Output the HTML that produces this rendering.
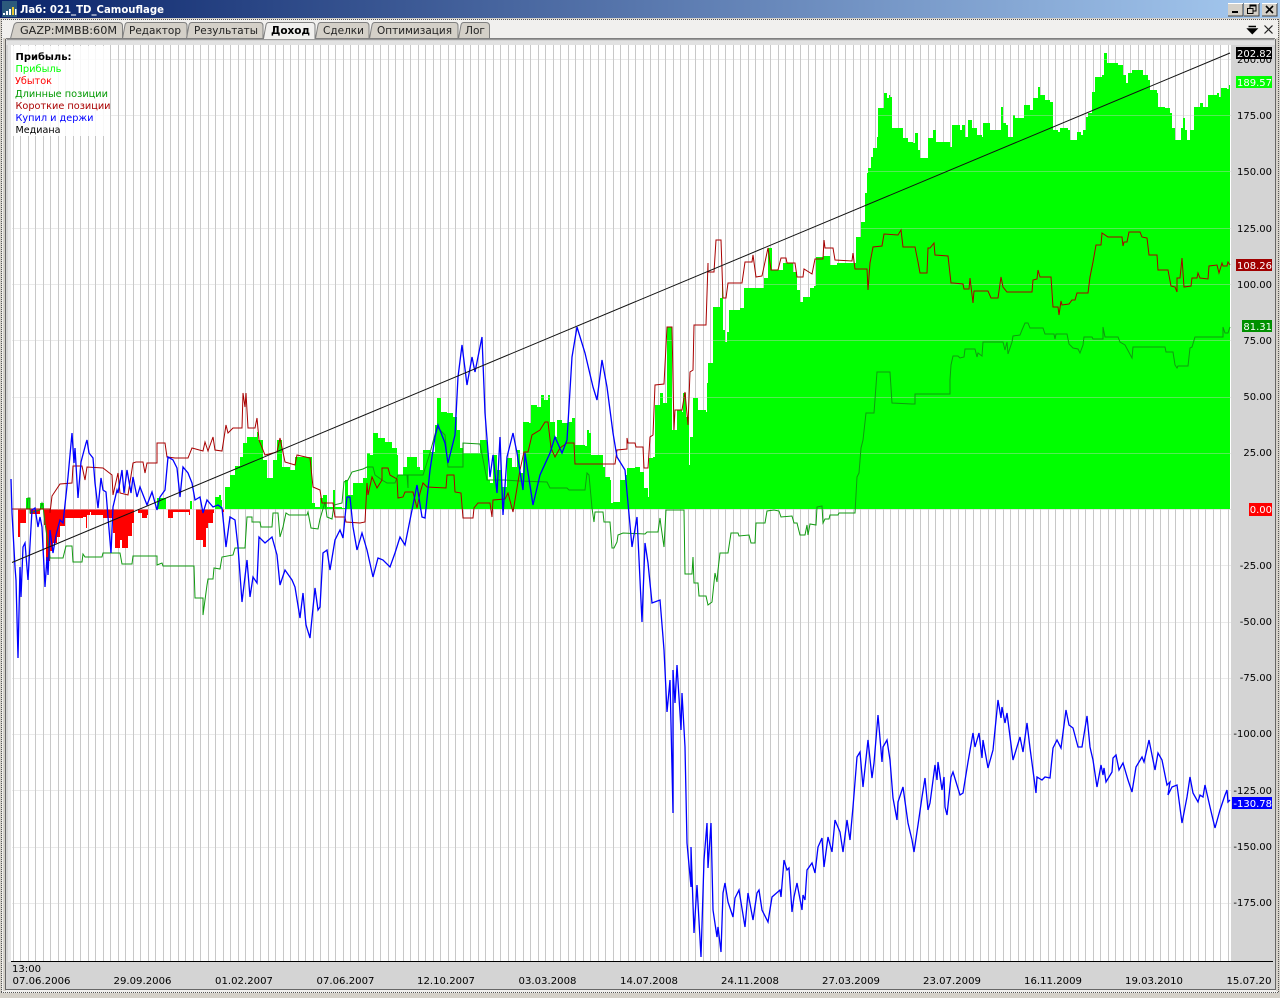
<!DOCTYPE html>
<html><head><meta charset="utf-8"><title>Лаб: 021_TD_Camouflage</title>
<style>
html,body{margin:0;padding:0;background:#d4d0c8;width:1280px;height:998px;overflow:hidden}
svg{display:block}
text{font-family:"DejaVu Sans","Liberation Sans",sans-serif;font-size:10px;fill:#000}
.tab{font-size:10.5px;fill:#222}
.lg{font-size:9.5px}
.ax{text-anchor:end}
.tag{fill:#fff;text-anchor:end}
</style></head><body>
<svg width="1280" height="998" viewBox="0 0 1280 998" xmlns="http://www.w3.org/2000/svg">
<defs>
<linearGradient id="tb" x1="0" x2="1" y1="0" y2="0"><stop offset="0" stop-color="#0a246a"/><stop offset="1" stop-color="#a6caf0"/></linearGradient>
<pattern id="vg" patternUnits="userSpaceOnUse" x="5" y="0" width="15" height="20"><rect x="0" y="0" width="1" height="20" fill="#c8c8c8"/><rect x="8" y="0" width="1" height="20" fill="#c8c8c8"/></pattern>
<clipPath id="pc"><rect x="10" y="45" width="1221" height="916"/></clipPath>
</defs>

<rect width="1280" height="998" fill="#d4d0c8"/>
<!-- title bar -->
<rect x="0" y="0" width="1280" height="18" fill="url(#tb)"/>
<rect x="2" y="1" width="15" height="16" fill="#2c5a7c"/>
<g shape-rendering="crispEdges">
<rect x="3" y="13" width="2" height="2" fill="#fff"/><rect x="6" y="11" width="2" height="4" fill="#fff"/><rect x="9" y="9" width="2" height="6" fill="#fff"/><rect x="12" y="7" width="2" height="8" fill="#e8c832"/><rect x="15" y="9" width="1.5" height="6" fill="#fff"/>
</g>
<text x="20" y="13" font-weight="bold" style="font-size:11px;fill:#fff" textLength="144" lengthAdjust="spacingAndGlyphs">Лаб: 021_TD_Camouflage</text>
<!-- window buttons -->
<g shape-rendering="crispEdges">
<rect x="1228" y="3" width="15" height="13" fill="#d4d0c8"/>
<rect x="1244" y="3" width="15" height="13" fill="#d4d0c8"/>
<rect x="1262" y="3" width="15" height="13" fill="#d4d0c8"/>
<path d="M1228 16H1243V3M1244 16H1259V3M1262 16H1277V3" fill="none" stroke="#404040"/>
<path d="M1228 3.5H1243M1244 3.5H1259M1262 3.5H1277" fill="none" stroke="#fff"/>
<rect x="1232" y="11" width="6" height="2" fill="#000"/>
<rect x="1250" y="5" width="6" height="6" fill="none" stroke="#000"/><rect x="1250" y="5" width="6" height="1.5" fill="#000"/>
<rect x="1247.5" y="8.5" width="5.5" height="5" fill="#d4d0c8" stroke="#000"/>
</g>
<path d="M1266 6L1273 13M1273 6L1266 13" stroke="#000" stroke-width="1.6" fill="none"/>

<!-- inner panel -->
<rect x="2" y="19" width="1276" height="974" fill="#f1f0ee"/>
<path d="M1 19.5H1279M1.5 19V993M1278.5 19V993M1 992.5H1279" fill="none" stroke="#555" stroke-dasharray="1 1" shape-rendering="crispEdges"/>
<rect x="3" y="38" width="3" height="953" fill="#d4d0c8"/>
<rect x="1276" y="38" width="2" height="953" fill="#d4d0c8"/>

<!-- close/menu in tab strip -->
<path d="M1248.5 26.5H1256M1248 29L1252.3 33.5L1256.7 29Z" stroke="#000" fill="#000" stroke-width="1.4"/>
<path d="M1264.5 25.5L1272.5 33.5M1272.5 25.5L1264.5 33.5" stroke="#222" stroke-width="1.2" fill="none"/>

<!-- tabs -->
<g stroke="#808080" stroke-width="1" fill="#d4d0c8">
<path d="M10.5 38.5L14 25Q15 22.5 18 22.5H119Q122.5 22.5 122.5 26V38.5Z"/>
<path d="M122.5 38.5L125 25Q125.5 22.5 128 22.5H184Q187 22.5 187 26V38.5Z"/>
<path d="M186.5 38.5L189 25Q189.5 22.5 192 22.5H260Q263 22.5 263 26V38.5Z"/>
<path d="M315.5 38.5L318 25Q318.5 22.5 321 22.5H366Q369 22.5 369 26V38.5Z"/>
<path d="M369.5 38.5L372 25Q372.5 22.5 375 22.5H455Q458 22.5 458 26V38.5Z"/>
<path d="M458.5 38.5L461 25Q461.5 22.5 464 22.5H486Q489.5 22.5 489.5 26V38.5Z"/>
</g>
<rect x="6" y="38" width="1269" height="1.5" fill="#808080"/>
<path d="M263.5 40V38.5L266 25Q266.5 22.5 269 22.5H312Q315 22.5 315 26V40Z" fill="#f1f0ee" stroke="#808080"/>
<rect x="265" y="37" width="49" height="4" fill="#f1f0ee"/>
<text class="tab" x="20" y="34" textLength="97" lengthAdjust="spacingAndGlyphs">GAZP:MMBB:60M</text>
<text class="tab" x="129" y="34" textLength="52" lengthAdjust="spacingAndGlyphs">Редактор</text>
<text class="tab" x="194" y="34" textLength="64" lengthAdjust="spacingAndGlyphs">Результаты</text>
<text class="tab" x="271" y="34" font-weight="bold" style="fill:#000" textLength="39" lengthAdjust="spacingAndGlyphs">Доход</text>
<text class="tab" x="323" y="34" textLength="41" lengthAdjust="spacingAndGlyphs">Сделки</text>
<text class="tab" x="377" y="34" textLength="75" lengthAdjust="spacingAndGlyphs">Оптимизация</text>
<text class="tab" x="465" y="34" textLength="20" lengthAdjust="spacingAndGlyphs">Лог</text>

<!-- chart frame -->
<rect x="6" y="39" width="1269" height="950" fill="#d4d4d4"/>
<rect x="6" y="41" width="1269" height="4" fill="#e2e2e2"/>
<path d="M5.5 39V989.5H1275.5V39" fill="none" stroke="#666" shape-rendering="crispEdges"/>
<path d="M7 39.5H1274" fill="none" stroke="#999" shape-rendering="crispEdges"/>
<rect x="8" y="45" width="3" height="917" fill="#e6e6e6"/>
<rect x="11" y="45" width="1220" height="916" fill="#fff"/>
<rect x="12" y="45" width="1219" height="916" fill="url(#vg)" shape-rendering="crispEdges"/>

<g clip-path="url(#pc)">
<!-- Loss area -->
<path fill="#f00" shape-rendering="crispEdges" d="M18 509V537H20V523H26V509H30V514H40V509H44V525H46V561H50V551H53V543H57V537H60V526H65V518H83V517H86V528H87V515H90V512H91V515H103V518H112V520H113V533H115V548H120V540H122V548H128V536H132V523H134V509H138V513H142V518H147V515H148V509H168V518H173V512H189V515H190V509H196V540H203V547H206V528H208V523H213V513H214V509H222V512H224V509Z"/>
<!-- Profit area -->
<path fill="#0f0" shape-rendering="crispEdges" d="M26 509V498H30V509ZM40 509V503H44V509ZM157 509V498H166V509ZM190 509V501H192V509ZM215 509V497H219V495H221V500H222V509Z"/>
<path fill="#0f0" shape-rendering="crispEdges" d="M225 509V487H230V475H235V466H240V457H243V443H247V437H253V437H257V432H258V440H263V460H267V478H272V478H273V460H277V440H282V467H290V470H295V457H307V457H312V503H315V507H320V498H323V495H327V507H333V490H335V507H342V508H345V480H348V495H353V483H363V478H367V453H370V455H373V433H378V438H385V442H392V448H397V455H398V475H403V467H407V457H413V457H417V467H420V470H423V450H430V452H435V425H437V398H441V412H447V413H453V417H457V430H460V448H463V443H463V453H478V453H480V440H487V442H488V480H490V483H493V455H497V470H502V487H507V458H512V467H517V450H520V473H523V422H529V423H531V405H537V407H541V395H544V400H548V395H550V422H555V437H557V420H562V423H568V422H572V418H575V425H575V445H585V446H587V430H589V433H591V455H603V467H605V477H610V480H611V503H613V502H620V480H625V475H627V468H635V467H640V472H644V488H648V497H649V458H653V457H655V405H660V393H663V403H667V327H672V430H677V410H682V412H683V393H686V417H689V465H690V437H693V398H698V410H699V410H706V412H707V383H708V363H713V307H715V307H720V298H722V283H723V330H725V342H727V332H729V310H740V308H744V288H750V288H762V288H764V278H768V248H772V270H778V270H783V263H793V272H797V290H800V302H803V297H810V288H814V286H816V257H823V256H830V265H837V263H853V263H856V237H861V222H865V193H867V173H868V168H871V157H873V148H877V137H878V108H883V108H884V93H887V98H889V95H890V97H892V128H900V128H903V138H908V142H913V143H915V133H918V150H920V158H927V158H928V138H933V130H936V142H948V142H950V147H952V125H960V130H962V125H965V137H968V120H972V128H977V135H982V137H983V123H988V123H990V130H998V130H1001V107H1003V123H1006V125H1008V137H1012V137H1013V115H1015V118H1022V118H1024V105H1029V105H1030V110H1033V98H1037V98H1038V87H1040V95H1043V95H1045V100H1050V102H1053V130H1058V132H1060V128H1068V130H1070V140H1075V140H1077V132H1081V135H1083V130H1086V117H1088V113H1092V92H1095V77H1102V75H1104V53H1107V63H1118V65H1123V75H1126V83H1128V73H1132V70H1138V70H1143V75H1148V80H1150V90H1157V93H1158V107H1165V108H1170V113H1172V128H1175V140H1179V140H1181V128H1183V118H1185V130H1187V140H1190V130H1194V107H1200V103H1203V107H1208V95H1217V93H1219V97H1221V88H1227V89H1229V85H1230V509Z"/>
</g>
<!-- horizontal grid -->
<g fill="rgba(205,205,205,.42)" shape-rendering="crispEdges">
<rect x="12" y="59" width="1219" height="1"/><rect x="12" y="115" width="1219" height="1"/><rect x="12" y="171" width="1219" height="1"/><rect x="12" y="228" width="1219" height="1"/><rect x="12" y="284" width="1219" height="1"/><rect x="12" y="340" width="1219" height="1"/><rect x="12" y="397" width="1219" height="1"/><rect x="12" y="453" width="1219" height="1"/><rect x="12" y="565" width="1219" height="1"/><rect x="12" y="622" width="1219" height="1"/><rect x="12" y="678" width="1219" height="1"/><rect x="12" y="734" width="1219" height="1"/><rect x="12" y="790" width="1219" height="1"/><rect x="12" y="847" width="1219" height="1"/><rect x="12" y="903" width="1219" height="1"/>
</g>
<rect x="12" y="509" width="1219" height="1" fill="rgba(205,205,205,.55)" shape-rendering="crispEdges"/>

<g clip-path="url(#pc)" fill="none" stroke-width="1" stroke-linejoin="miter">
<!-- Long positions -->
<path stroke="#109a10" d="M12 509L27 509L28 498L30 498L30 513L40 510L42 503L43 506L45 523L50 558L63 558L66 546L72 546L73 562L82 562L83 554L85 557L102 557L103 553L120 553L122 564L132 564L133 556L157 556L157 565L162 563L163 566L194 566L195 598L203 598L203 615L207 585L208 579L213 579L214 568L220 569L222 557L233 555L235 548L245 548L247 517L252 517L252 522L260 522L261 527L272 527L273 513L278 513L280 537L283 527L286 513L289 515L307 515L308 512L311 528L318 529L320 519L325 502L327 517L332 519L334 505L342 503L344 482L348 480L352 472L363 469L367 467L373 467L375 475L382 480L387 483L395 483L398 475L407 475L408 488L408 475L423 475L430 453L437 427L445 435L448 467L463 467L463 443L480 444L487 480L505 480L520 481L547 482L550 488L567 488L569 490L585 490L587 473L589 475L592 508L594 522L595 512L603 512L604 522L610 522L612 548L614 548L617 542L618 535L623 533L645 534L647 532L658 532L660 518L661 526L664 547L666 510L684 510L685 574L692 574L693 557L694 583L698 583L699 596L706 596L708 605L712 602L715 573L717 582L718 570L720 553L728 553L731 533L738 533L739 536L749 535L751 543L755 543L756 523L765 523L767 511L774 510L779 511L781 517L792 516L794 523L797 523L800 535L805 535L807 525L808 535L810 524L816 525L817 507L822 506L823 523L825 519L829 519L830 515L838 515L839 513L855 513L857 477L859 473L861 448L863 440L866 413L874 413L877 372L890 372L892 403L912 404L915 404L915 394L945 394L950 394L950 380L951 365L953 356L958 356L960 358L964 357L965 349L975 349L977 357L978 353L982 356L983 342L1003 342L1005 350L1007 342L1008 354L1012 342L1013 336L1020 335L1022 330L1025 323L1028 323L1030 328L1043 328L1045 334L1054 334L1055 339L1056 334L1067 334L1069 344L1073 348L1078 349L1080 353L1083 345L1084 337L1092 337L1093 339L1103 339L1103 327L1105 337L1118 337L1120 342L1125 345L1132 358L1133 347L1147 347L1165 347L1166 352L1173 352L1175 365L1177 368L1178 366L1188 366L1190 348L1192 347L1195 337L1223 337L1223 327L1225 333L1228 333L1230 327"/>
<!-- Short positions -->
<path stroke="#a80000" d="M12 509L50 509L50 513L52 496L60 484L72 483L73 466L82 466L85 480L87 467L103 468L112 475L113 495L118 473L120 493L128 495L133 463L136 462L143 462L145 473L147 463L157 463L157 443L165 443L167 457L175 458L188 458L192 448L203 451L205 442L208 451L213 437L215 450L222 451L226 425L228 433L233 428L242 428L243 393L245 407L246 393L248 428L255 428L257 418L259 440L265 455L277 452L280 438L285 462L295 465L297 455L310 458L313 487L320 490L322 503L333 503L335 517L345 517L346 522L360 523L365 522L367 483L368 495L372 477L377 488L382 480L382 468L388 468L390 475L397 479L398 498L403 497L405 492L413 492L417 508L420 493L423 483L427 487L446 488L447 475L454 475L455 492L461 493L463 518L473 518L474 508L478 503L490 503L492 517L493 500L505 499L508 493L513 512L515 500L520 470L524 452L528 452L532 435L540 430L545 422L548 422L551 448L555 457L560 448L567 443L574 443L575 464L615 464L617 450L627 449L627 438L628 443L635 443L636 447L643 447L644 468L648 468L650 437L653 435L655 385L664 384L667 327L672 327L674 430L675 410L682 410L685 392L688 425L690 372L693 370L694 325L706 325L708 263L708 272L714 272L716 240L721 240L723 298L726 298L728 283L742 283L745 262L752 262L753 255L756 277L762 276L768 248L771 270L778 270L781 258L786 258L787 263L795 263L797 277L803 277L804 269L812 274L815 259L823 259L824 240L825 248L833 248L835 260L852 261L853 253L855 269L867 269L868 290L870 263L873 247L882 246L884 234L898 235L901 230L903 247L915 247L918 262L920 273L927 273L928 248L930 248L934 243L935 255L948 256L951 283L953 283L963 284L964 289L969 289L970 278L973 303L974 291L988 291L991 298L998 298L1001 277L1003 287L1007 292L1032 292L1033 280L1037 279L1038 270L1040 277L1051 277L1053 307L1058 307L1059 315L1061 301L1062 305L1069 304L1072 300L1075 300L1077 293L1088 293L1090 277L1093 262L1096 245L1101 245L1102 233L1108 237L1122 237L1123 246L1124 242L1127 242L1129 232L1140 232L1142 237L1147 238L1149 255L1157 255L1158 270L1168 270L1171 286L1175 287L1177 292L1177 278L1180 278L1182 258L1184 287L1191 286L1192 278L1197 278L1198 273L1200 278L1208 279L1209 266L1217 265L1219 273L1222 263L1223 266L1227 266L1228 262L1230 265"/>
<!-- Buy and hold -->
<path id="bh" stroke="#0000ff" stroke-width="1.3" d="M11 479L12 513L15 567L16 580L18 658L20 567L21 597L23 547L25 543L28 580L32 510L35 508L38 527L40 517L42 527L45 587L47 557L48 575L50 530L53 553L56 535L60 520L63 523L68 477L72 433L74 463L75 448L78 498L81 462L86 443L87 440L89 453L93 458L95 483L98 508L101 478L103 490L106 492L108 517L111 553L113 507L117 490L118 493L122 470L124 493L127 470L131 493L133 477L137 497L140 487L147 505L152 492L157 510L160 497L165 490L168 457L173 460L177 468L180 497L183 467L188 473L192 483L195 500L200 497L203 513L207 500L213 507L218 505L222 508L226 547L230 517L235 520L238 547L242 602L247 560L250 597L253 577L257 583L259 537L265 543L272 537L277 555L280 585L285 570L292 580L295 587L300 618L303 593L306 625L310 638L315 588L318 610L320 607L323 553L327 550L330 570L335 540L340 530L343 538L347 497L350 497L353 527L357 550L362 533L367 550L373 577L378 558L383 560L390 567L395 553L400 537L405 545L410 520L417 485L422 517L425 518L430 470L435 437L438 425L445 443L448 463L455 435L458 377L462 345L467 385L472 357L475 372L482 337L485 413L490 477L493 455L497 493L500 437L503 515L507 457L513 433L517 453L523 490L525 453L533 505L540 475L550 453L555 437L562 453L567 440L572 357L577 327L585 353L593 387L597 400L602 360L607 387L613 433L617 457L625 470L632 547L637 517L642 622L645 543L648 563L652 603L660 600L663 637L664 650L665 670L667 712L670 680L673 813L673 670L675 703L677 665L681 730L682 693L685 747L687 843L691 887L691 847L694 933L697 885L701 957L704 860L707 823L708 868L711 823L713 910L717 937L718 927L721 952L723 893L725 883L728 902L733 917L735 898L739 890L745 927L748 893L753 920L757 893L759 890L762 910L768 922L772 897L780 890L781 897L784 860L787 870L789 868L792 912L794 897L797 883L802 910L803 895L805 900L807 870L812 863L815 873L818 847L822 838L824 867L828 837L832 852L835 820L840 832L843 852L847 820L850 840L853 807L857 757L860 752L863 787L868 740L872 778L874 763L878 715L882 762L883 747L887 740L890 760L893 798L897 820L898 802L903 787L908 823L912 840L914 852L918 825L922 797L925 778L928 810L930 803L932 788L935 765L937 780L938 762L942 790L944 777L945 807L947 815L951 777L953 772L960 795L963 793L968 762L973 733L975 747L979 733L982 758L983 740L988 768L993 750L998 700L1001 718L1002 707L1005 723L1007 713L1013 760L1020 737L1023 752L1027 723L1030 748L1036 793L1037 777L1042 780L1045 777L1050 778L1053 748L1057 740L1061 748L1066 710L1069 725L1073 728L1078 747L1082 747L1087 716L1090 747L1093 760L1097 787L1101 765L1103 775L1104 768L1106 782L1112 772L1113 758L1116 755L1119 770L1123 763L1128 780L1132 792L1136 767L1142 757L1144 762L1149 740L1155 770L1158 753L1162 760L1167 785L1170 782L1168 795L1172 787L1177 785L1182 823L1187 797L1190 777L1193 793L1198 802L1200 795L1203 797L1205 785L1210 807L1215 828L1220 810L1225 795L1227 790L1228 802L1230 800"/>
<!-- Median -->
<path stroke="#111" d="M12 562.5L1230 53"/>
</g>

<!-- legend -->
<rect x="12" y="46" width="98" height="90" fill="#fff" fill-opacity=".86"/>
<text class="lg" x="15.5" y="60" font-weight="bold" textLength="56" lengthAdjust="spacingAndGlyphs">Прибыль:</text>
<text class="lg" x="15.5" y="72" style="fill:#0f0" textLength="46" lengthAdjust="spacingAndGlyphs">Прибыль</text>
<text class="lg" x="15" y="84" style="fill:#f00" textLength="37" lengthAdjust="spacingAndGlyphs">Убыток</text>
<text class="lg" x="15" y="97" style="fill:#090" textLength="93" lengthAdjust="spacingAndGlyphs">Длинные позиции</text>
<text class="lg" x="15.5" y="109" style="fill:#a00" textLength="95" lengthAdjust="spacingAndGlyphs">Короткие позиции</text>
<text class="lg" x="15.5" y="121" style="fill:#00f" textLength="78" lengthAdjust="spacingAndGlyphs">Купил и держи</text>
<text class="lg" x="15.5" y="133" textLength="45" lengthAdjust="spacingAndGlyphs">Медиана</text>

<!-- y axis -->
<rect x="1231" y="45" width="44" height="917" fill="#d4d4d4"/>
<g class="ax">
<text class="ax" x="1272" y="63">200.00</text>
<text class="ax" x="1272" y="119">175.00</text>
<text class="ax" x="1272" y="175">150.00</text>
<text class="ax" x="1272" y="232">125.00</text>
<text class="ax" x="1272" y="288">100.00</text>
<text class="ax" x="1272" y="344">75.00</text>
<text class="ax" x="1272" y="400">50.00</text>
<text class="ax" x="1272" y="456">25.00</text>
<text class="ax" x="1272" y="569">-25.00</text>
<text class="ax" x="1272" y="625">-50.00</text>
<text class="ax" x="1272" y="681">-75.00</text>
<text class="ax" x="1272" y="737">-100.00</text>
<text class="ax" x="1272" y="794">-125.00</text>
<text class="ax" x="1272" y="850">-150.00</text>
<text class="ax" x="1272" y="906">-175.00</text>
</g>
<g shape-rendering="crispEdges">
<rect x="1236" y="47" width="36" height="12" fill="#000"/>
<rect x="1236" y="76" width="36" height="12" fill="#0f0"/>
<rect x="1236" y="259" width="36" height="12" fill="#a00000"/>
<rect x="1242" y="320" width="30" height="12" fill="#009000"/>
<rect x="1249" y="503" width="23" height="13" fill="#f00"/>
<rect x="1232" y="797" width="40" height="12" fill="#0000ff"/>
</g>
<text class="tag" x="1272" y="57">202.82</text>
<text class="tag" x="1272" y="86">189.57</text>
<text class="tag" x="1272" y="269">108.26</text>
<text class="tag" x="1272" y="330">81.31</text>
<text class="tag" x="1272" y="513">0.00</text>
<text class="tag" x="1272" y="807">-130.78</text>

<!-- x axis -->
<rect x="11" y="961" width="1262" height="1" fill="#000" shape-rendering="crispEdges"/>
<text x="12" y="972" textLength="29" lengthAdjust="spacingAndGlyphs">13:00</text>
<text x="12.5" y="984" textLength="58" lengthAdjust="spacingAndGlyphs">07.06.2006</text>
<text x="113.5" y="984" textLength="58" lengthAdjust="spacingAndGlyphs">29.09.2006</text>
<text x="215" y="984" textLength="58" lengthAdjust="spacingAndGlyphs">01.02.2007</text>
<text x="316.5" y="984" textLength="58" lengthAdjust="spacingAndGlyphs">07.06.2007</text>
<text x="417" y="984" textLength="58" lengthAdjust="spacingAndGlyphs">12.10.2007</text>
<text x="518.5" y="984" textLength="58" lengthAdjust="spacingAndGlyphs">03.03.2008</text>
<text x="620" y="984" textLength="58" lengthAdjust="spacingAndGlyphs">14.07.2008</text>
<text x="721" y="984" textLength="58" lengthAdjust="spacingAndGlyphs">24.11.2008</text>
<text x="822" y="984" textLength="58" lengthAdjust="spacingAndGlyphs">27.03.2009</text>
<text x="923" y="984" textLength="58" lengthAdjust="spacingAndGlyphs">23.07.2009</text>
<text x="1024" y="984" textLength="58" lengthAdjust="spacingAndGlyphs">16.11.2009</text>
<text x="1125" y="984" textLength="58" lengthAdjust="spacingAndGlyphs">19.03.2010</text>
<text x="1226.5" y="984" textLength="45" lengthAdjust="spacingAndGlyphs">15.07.20</text>
</svg>
</body></html>
